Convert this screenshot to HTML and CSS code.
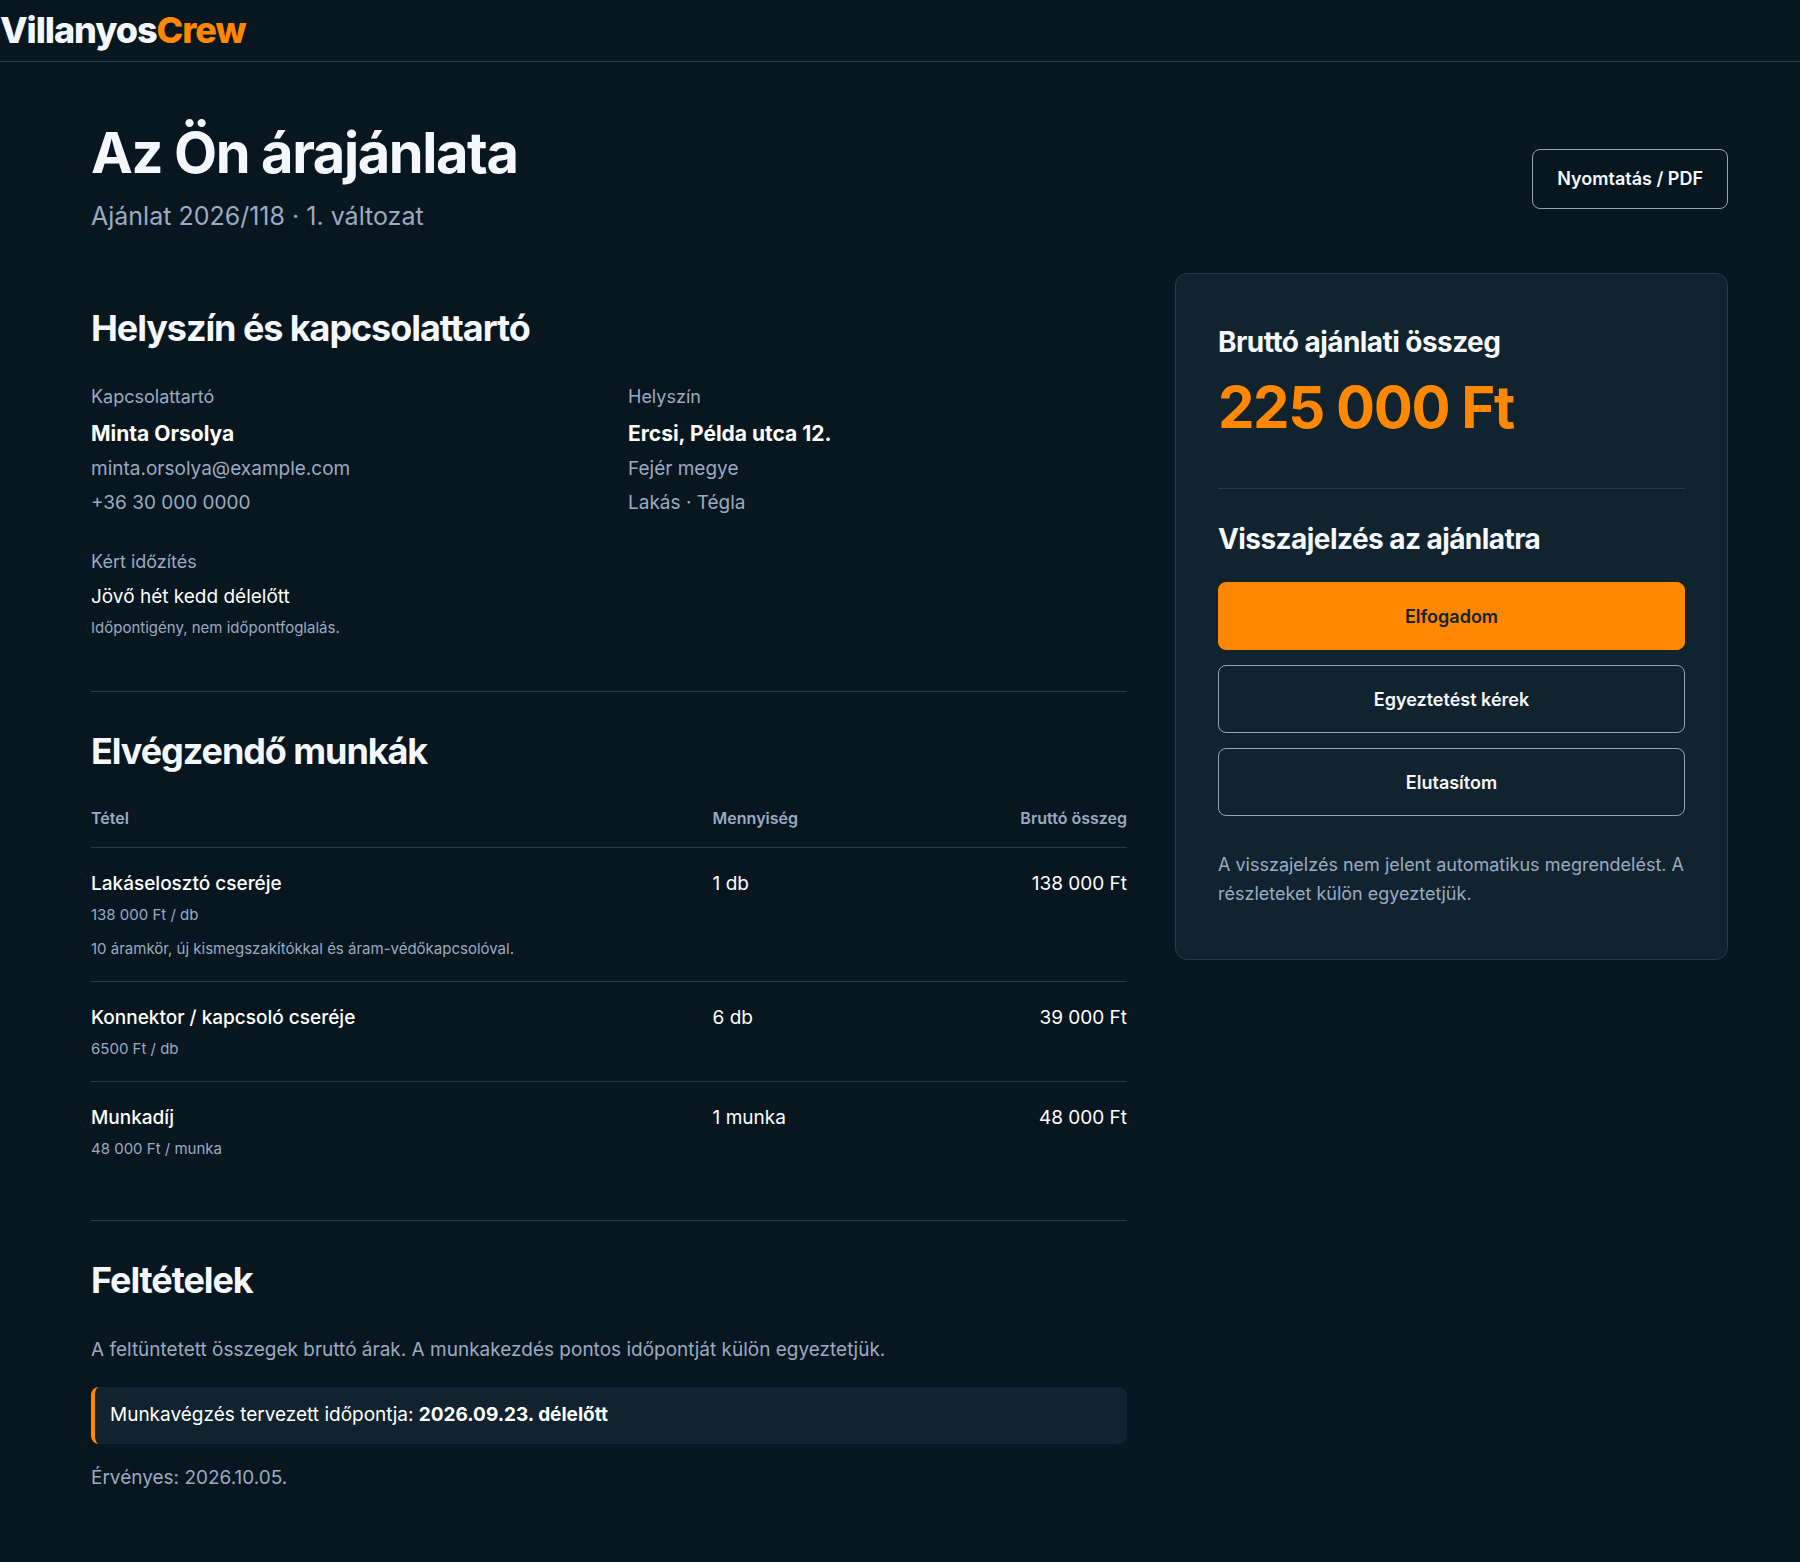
FILE: index.html
```html
<!DOCTYPE html>
<html lang="hu">
<head>
<meta charset="utf-8">
<meta name="viewport" content="width=device-width, initial-scale=1">
<title>Az Ön árajánlata – VillanyosCrew</title>
<link rel="stylesheet" href="styles.css">
</head>
<body>
<header class="site-header">
  <a class="brand" href="#">Villanyos<span class="brand-accent">Crew</span></a>
</header>
<main class="page">
  <div class="page-head">
    <div>
      <h1 class="page-title">Az Ön árajánlata</h1>
      <p class="page-subtitle">Ajánlat 2026/118 · 1. változat</p>
    </div>
    <button class="button print-button" type="button">Nyomtatás / PDF</button>
  </div>
  <div class="layout">
    <div class="details">
      <section class="section">
        <h2 class="section-title">Helyszín és kapcsolattartó</h2>
        <div class="contact-grid">
          <div>
            <p class="label">Kapcsolattartó</p>
            <p class="name">Minta Orsolya</p>
            <p class="muted">minta.orsolya@example.com</p>
            <p class="muted">+36 30 000 0000</p>
          </div>
          <div>
            <p class="label">Helyszín</p>
            <p class="name">Ercsi, Példa utca 12.</p>
            <p class="muted">Fejér megye</p>
            <p class="muted">Lakás · Tégla</p>
          </div>
          <div>
            <p class="label">Kért időzítés</p>
            <p>Jövő hét kedd délelőtt</p>
            <p class="small">Időpontigény, nem időpontfoglalás.</p>
          </div>
        </div>
      </section>
      <section class="section">
        <h2 class="section-title">Elvégzendő munkák</h2>
        <table class="items">
          <thead>
            <tr><th class="col-item" scope="col">Tétel</th><th scope="col">Mennyiség</th><th class="amount" scope="col">Bruttó összeg</th></tr>
          </thead>
          <tbody>
            <tr>
              <td><p class="item-name">Lakáselosztó cseréje</p><p class="small">138 000 Ft / db</p><p class="small item-note">10 áramkör, új kismegszakítókkal és áram-védőkapcsolóval.</p></td>
              <td>1 db</td>
              <td class="amount">138 000 Ft</td>
            </tr>
            <tr>
              <td><p class="item-name">Konnektor / kapcsoló cseréje</p><p class="small">6500 Ft / db</p></td>
              <td>6 db</td>
              <td class="amount">39 000 Ft</td>
            </tr>
            <tr>
              <td><p class="item-name">Munkadíj</p><p class="small">48 000 Ft / munka</p></td>
              <td>1 munka</td>
              <td class="amount">48 000 Ft</td>
            </tr>
          </tbody>
        </table>
      </section>
      <section class="section">
        <h2 class="section-title">Feltételek</h2>
        <p class="muted">A feltüntetett összegek bruttó árak. A munkakezdés pontos időpontját külön egyeztetjük.</p>
        <p class="callout">Munkavégzés tervezett időpontja: <strong>2026.09.23. délelőtt</strong></p>
        <p class="muted">Érvényes: 2026.10.05.</p>
      </section>
    </div>
    <aside class="card">
      <h2 class="card-title">Bruttó ajánlati összeg</h2>
      <p class="price">225 000 Ft</p>
      <div class="response">
        <h2 class="card-title">Visszajelzés az ajánlatra</h2>
        <div class="actions">
          <button class="button primary" type="button">Elfogadom</button>
          <button class="button" type="button">Egyeztetést kérek</button>
          <button class="button" type="button">Elutasítom</button>
        </div>
        <p class="card-note">A visszajelzés nem jelent automatikus megrendelést. A részleteket külön egyeztetjük.</p>
      </div>
    </aside>
  </div>
</main>
</body>
</html>
```
FILE: styles.css
```css
:root {
  --bg: #081620;
  --surface: #11232e;
  --line: #263c49;
  --outline: #94a3b3;
  --text: #ffffff;
  --heading: #f4f7fb;
  --muted: #9aabc0;
  --accent: #ff8800;
}

* { box-sizing: border-box; }

body {
  margin: 0;
  background: var(--bg);
  color: var(--text);
  font: 400 19px/34px Inter, "Liberation Sans", sans-serif;
}

h1, h2, p { margin: 0; }

/* Header */
.site-header {
  border-bottom: 1px solid var(--line);
}
.brand {
  display: block;
  color: var(--heading);
  font-size: 36px;
  font-weight: 800;
  line-height: 61px;
  letter-spacing: -0.03em;
  text-decoration: none;
}
.brand-accent { color: var(--accent); }

/* Page frame */
.page { padding: 58px 72px 67px 91px; }
.page-head {
  display: flex;
  align-items: center;
  justify-content: space-between;
  gap: 24px;
  margin-bottom: 35px;
}
.page-title {
  color: var(--heading);
  font-size: 56px;
  font-weight: 700;
  line-height: 66px;
  letter-spacing: -0.025em;
}
.page-subtitle {
  margin-top: 8px;
  color: var(--muted);
  font-size: 25px;
  line-height: 44px;
}
.layout {
  display: grid;
  grid-template-columns: minmax(0, 1036fr) minmax(0, 553fr);
  gap: 48px;
  align-items: start;
}

/* Sections */
.section {
  padding: 37px 0 39px;
  border-bottom: 1px solid var(--line);
}
.section:first-child { padding-top: 33px; }
.section:last-child {
  padding-bottom: 0;
  border-bottom: 0;
}
.section-title {
  margin-bottom: 31px;
  color: var(--heading);
  font-size: 36px;
  font-weight: 700;
  line-height: 44px;
  letter-spacing: -0.03em;
}
.contact-grid {
  display: grid;
  grid-template-columns: 1fr 1fr;
  gap: 26px 38px;
  padding-bottom: 11px;
}
.label {
  margin-bottom: 2px;
  color: var(--muted);
  font-size: 18px;
  line-height: 32px;
}
.name {
  font-size: 21px;
  font-weight: 700;
  line-height: 37px;
}
.muted { color: var(--muted); }
.small {
  color: var(--muted);
  font-size: 15px;
  line-height: 27px;
}

/* Items */
.items {
  width: 100%;
  border-collapse: collapse;
  table-layout: fixed;
}
.items th {
  padding: 0 0 15px;
  color: var(--muted);
  font-size: 16px;
  font-weight: 600;
  line-height: 28px;
  text-align: left;
}
.items td {
  padding: 19px 0;
  border-top: 1px solid var(--line);
  vertical-align: top;
}
.items .col-item { width: 60%; }
.items .amount { text-align: right; }
.item-name { font-weight: 500; }
.item-note { margin-top: 7px; }

.callout {
  margin: 20px 0 17px;
  padding: 11px 15px 12px;
  background: var(--surface);
  border-left: 4px solid var(--accent);
  border-radius: 8px;
}

/* Buttons */
.button {
  height: 68px;
  padding: 2px 24px 0;
  background: transparent;
  border: 1px solid var(--outline);
  border-radius: 8px;
  color: var(--heading);
  font: 600 18px/28px Inter, "Liberation Sans", sans-serif;
}
.print-button {
  height: 60px;
  padding-top: 0;
}
.primary {
  background: var(--accent);
  border-color: var(--accent);
  color: var(--surface);
}

/* Offer card */
.card {
  padding: 48px 42px 51px;
  background: var(--surface);
  border: 1px solid var(--line);
  border-radius: 12px;
}
.card-title {
  color: var(--heading);
  font-size: 28px;
  font-weight: 700;
  line-height: 40px;
  letter-spacing: -0.02em;
}
.price {
  margin-top: 10px;
  color: var(--accent);
  font-size: 58px;
  font-weight: 700;
  line-height: 70px;
  letter-spacing: -0.025em;
}
.response {
  margin-top: 46px;
  padding-top: 30px;
  border-top: 1px solid var(--line);
}
.actions {
  display: grid;
  gap: 15px;
  margin-top: 23px;
}
.card-note {
  margin-top: 34px;
  color: var(--muted);
  font-size: 18px;
  line-height: 29px;
}
```
